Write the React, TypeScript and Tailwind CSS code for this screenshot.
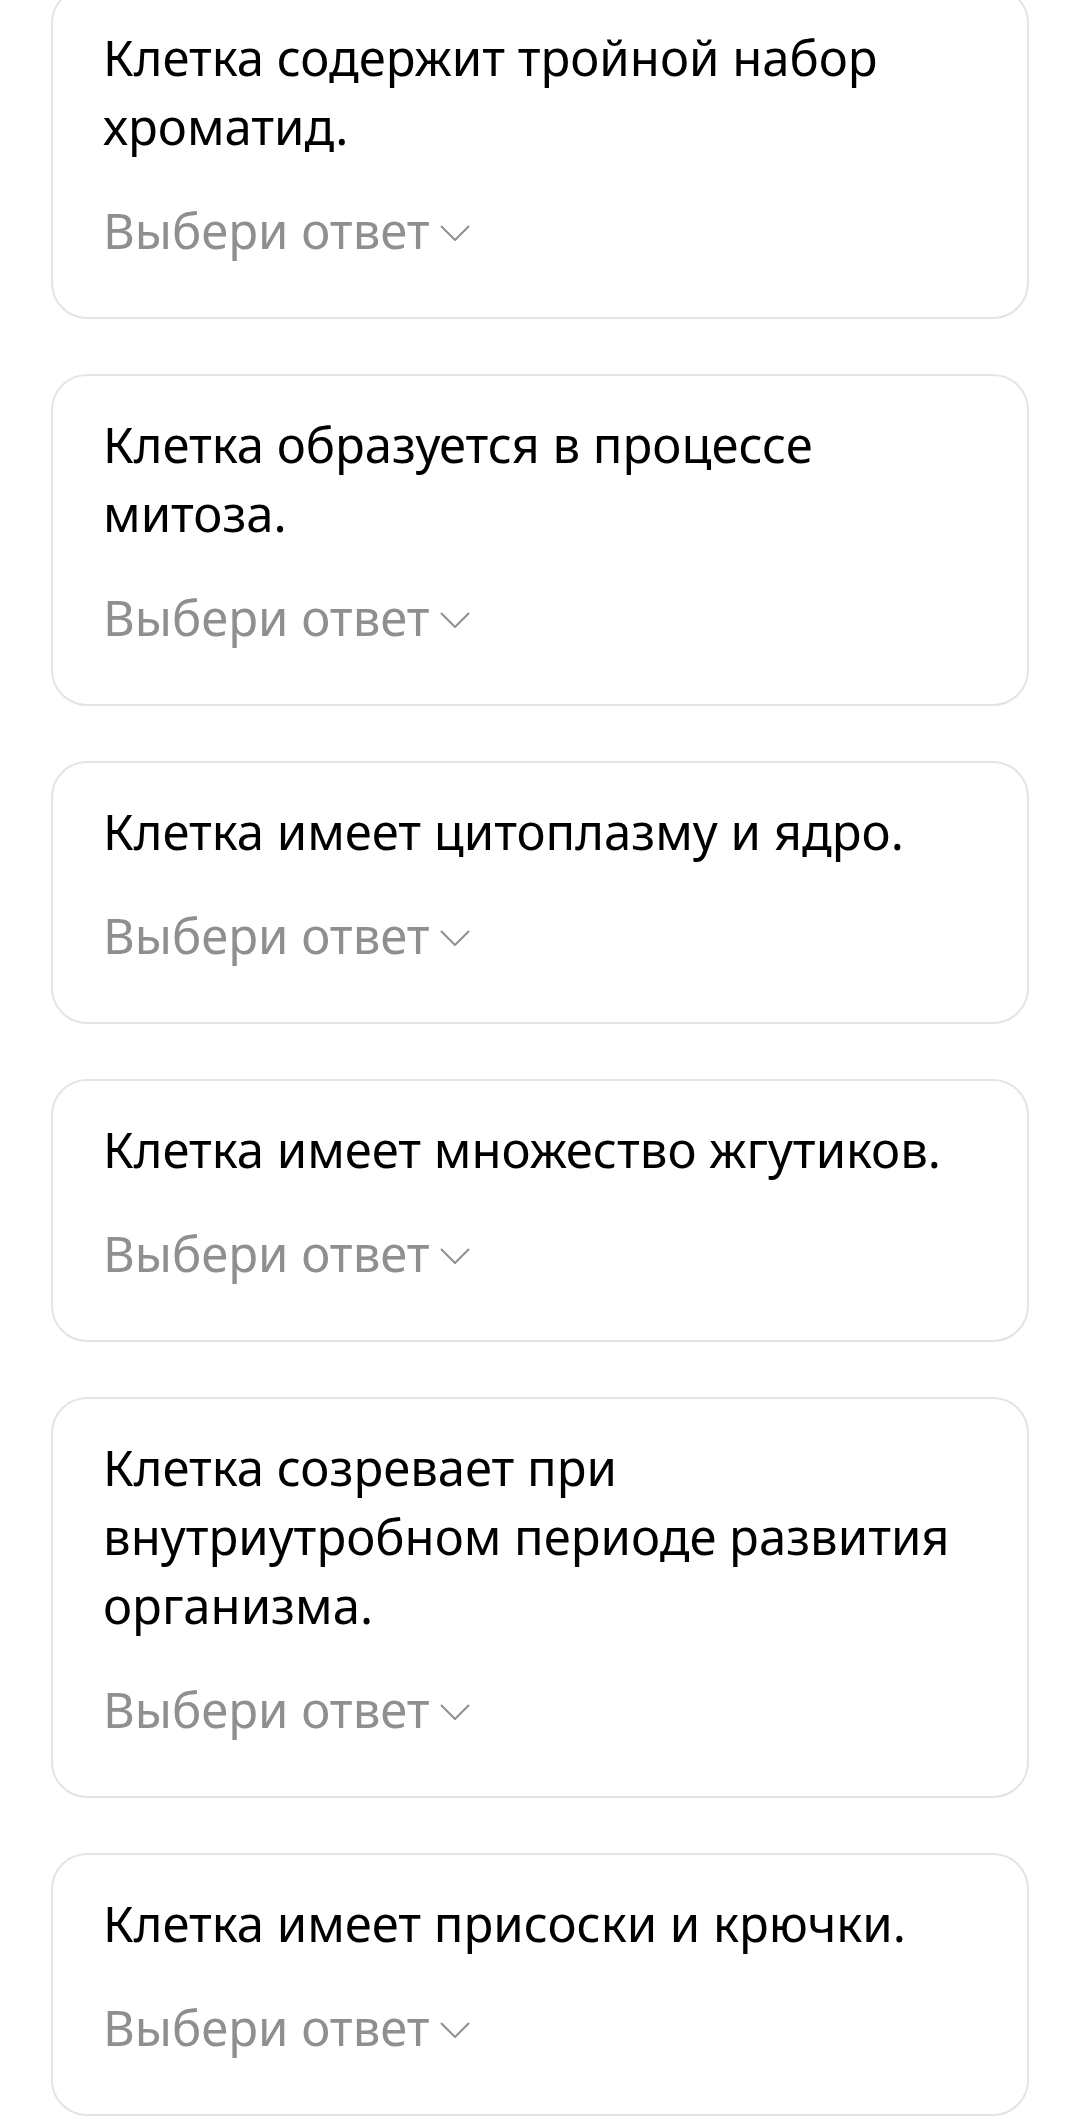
const questions = [
  "Клетка содержит тройной набор хроматид.",
  "Клетка образуется в процессе митоза.",
  "Клетка имеет цитоплазму и ядро.",
  "Клетка имеет множество жгутиков.",
  "Клетка созревает при внутриутробном периоде развития организма.",
  "Клетка имеет присоски и крючки.",
];

const Chevron = () => (
  <svg width="30" height="16" viewBox="0 0 30 16" fill="none" className="ml-[10px] mt-[6px]">
    <path d="M1 1 L15 15 L29 1" stroke="#8f8f8f" strokeWidth="2" />
  </svg>
);

const QuestionCard = ({ text }: { text: string }) => {
  return (
    <div className="rounded-[36px] border-2 border-[#e4e4e4] bg-white pt-[34px] pb-[55px] pl-[50px] pr-[69px]">
      <p className="text-[49px] leading-[69px] text-black">{text}</p>
      <button className="mt-[37px] flex items-center text-[49px] leading-[64px] text-[#8f8f8f]">
        <span>Выбери ответ</span>
        <Chevron />
      </button>
    </div>
  );
};

export default function App() {
  return (
    <div className="min-h-screen bg-white overflow-hidden" style={{ fontFamily: '"Noto Sans", "Open Sans", sans-serif' }}>
      <div className="-mt-[13px] flex flex-col gap-[55px] px-[51px]">
        {questions.map((q) => (
          <QuestionCard key={q} text={q} />
        ))}
      </div>
    </div>
  );
}
